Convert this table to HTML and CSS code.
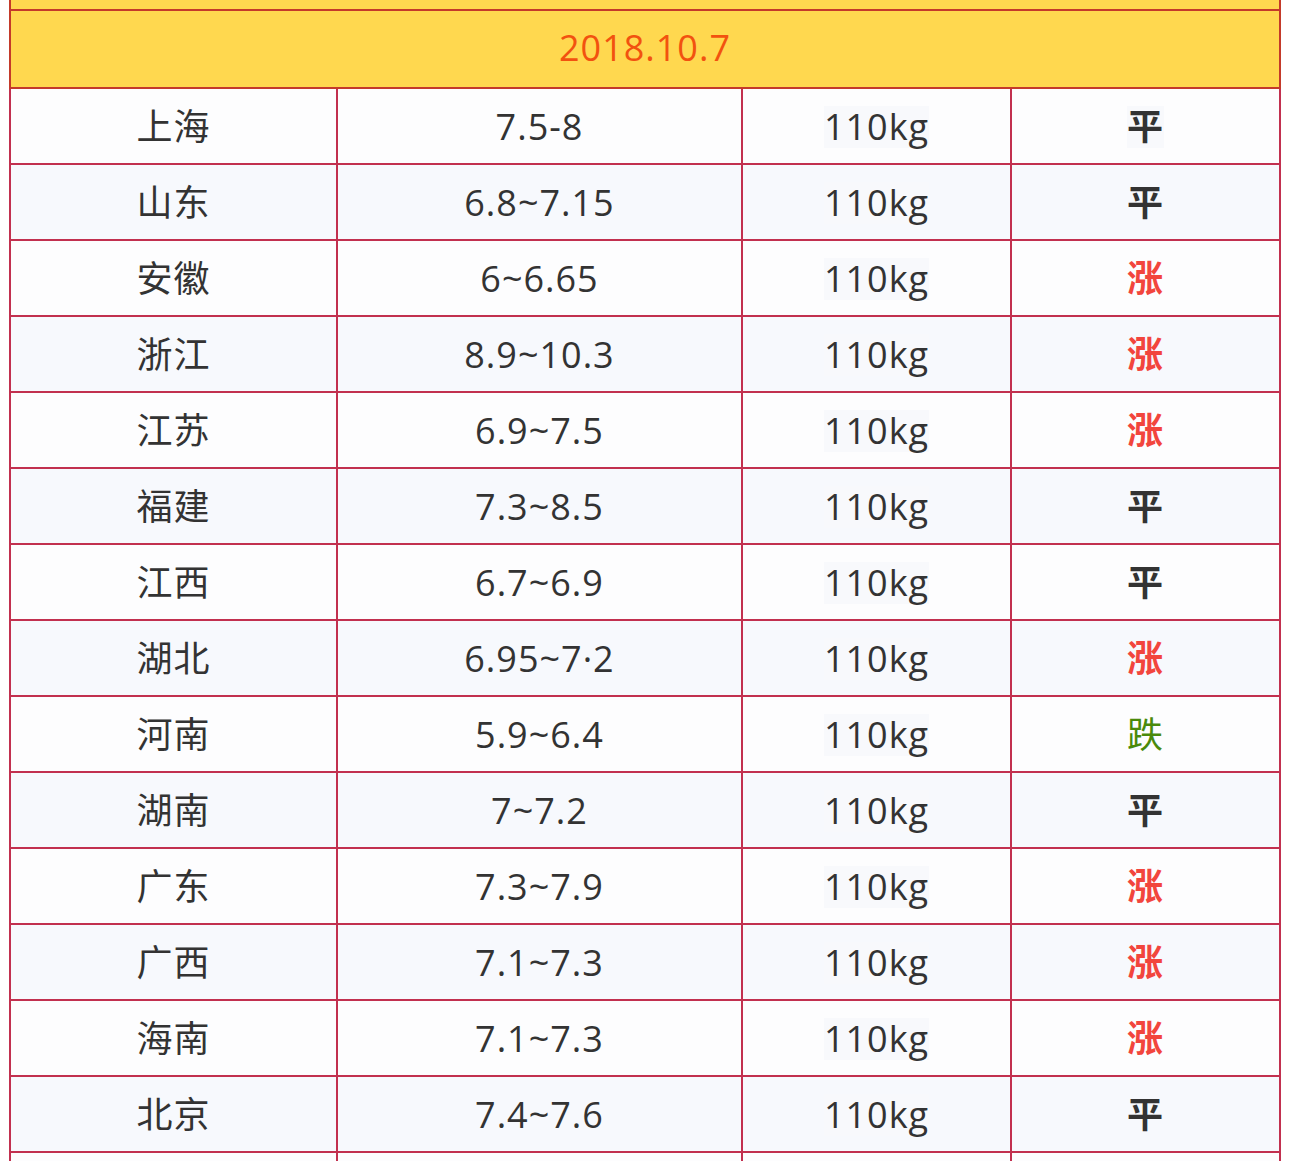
FILE: index.html
```html
<!DOCTYPE html>
<html lang="zh-CN">
<head>
<meta charset="utf-8">
<title>生猪价格 2018.10.7</title>
<link rel="stylesheet" href="styles.css">
</head>
<body>
<div class="wrap">
  <table class="price">
    <colgroup>
      <col class="c1"><col class="c2"><col class="c3"><col class="c4">
    </colgroup>
    <tbody>
      <tr class="top"><td colspan="4"></td></tr>
      <tr class="head"><td colspan="4">2018.10.7</td></tr>
      <tr><td>上海</td><td>7.5-8</td><td><span class="hl">110kg</span></td><td><span class="hl flat">平</span></td></tr>
      <tr><td>山东</td><td>6.8~7.15</td><td><span class="hl">110kg</span></td><td><span class="flat">平</span></td></tr>
      <tr><td>安徽</td><td>6~6.65</td><td><span class="hl">110kg</span></td><td><span class="up">涨</span></td></tr>
      <tr><td>浙江</td><td>8.9~10.3</td><td><span class="hl">110kg</span></td><td><span class="up">涨</span></td></tr>
      <tr><td>江苏</td><td>6.9~7.5</td><td><span class="hl">110kg</span></td><td><span class="up">涨</span></td></tr>
      <tr><td>福建</td><td>7.3~8.5</td><td><span class="hl">110kg</span></td><td><span class="flat">平</span></td></tr>
      <tr><td>江西</td><td>6.7~6.9</td><td><span class="hl">110kg</span></td><td><span class="flat">平</span></td></tr>
      <tr><td>湖北</td><td>6.95~7·2</td><td><span class="hl">110kg</span></td><td><span class="up">涨</span></td></tr>
      <tr><td>河南</td><td>5.9~6.4</td><td><span class="hl">110kg</span></td><td><span class="down">跌</span></td></tr>
      <tr><td>湖南</td><td>7~7.2</td><td><span class="hl">110kg</span></td><td><span class="flat">平</span></td></tr>
      <tr><td>广东</td><td>7.3~7.9</td><td><span class="hl">110kg</span></td><td><span class="up">涨</span></td></tr>
      <tr><td>广西</td><td>7.1~7.3</td><td><span class="hl">110kg</span></td><td><span class="up">涨</span></td></tr>
      <tr><td>海南</td><td>7.1~7.3</td><td><span class="hl">110kg</span></td><td><span class="up">涨</span></td></tr>
      <tr><td>北京</td><td>7.4~7.6</td><td><span class="hl">110kg</span></td><td><span class="flat">平</span></td></tr>
      <tr class="tail"><td></td><td></td><td></td><td></td></tr>
    </tbody>
  </table>
</div>
</body>
</html>
```
FILE: styles.css
```css
html, body {
  margin: 0;
  padding: 0;
  background: #ffffff;
}
.wrap {
  padding-left: 9px;
  width: 1286px;
  height: 1161px;
  overflow: hidden;
  box-sizing: border-box;
}
.price {
  width: 1270px;
  border-collapse: collapse;
  table-layout: fixed;
  font-family: "Open Sans", "Noto Sans CJK SC", sans-serif;
  font-size: 36px;
  letter-spacing: 1px;
  color: #333333;
}
.c1 { width: 327px; }
.c2 { width: 405px; }
.c3 { width: 269px; }
.c4 { width: 269px; }
.price td {
  border: 2px solid #c2304f;
  text-align: center;
  vertical-align: middle;
  height: 72px;
  padding: 2px 0 0 0;
  line-height: 44px;
}
.price tr:nth-child(odd) td { background: #fdfdfe; }
.price tr:nth-child(even) td { background: #f7f9fd; }
.price tr.top td {
  height: 9px;
  padding: 0;
  line-height: 0;
  background: #ffd84f;
  border-color: #c43a2a;
  border-top: 0;
}
.price tr.head td {
  background: #ffd84f;
  border-color: #c43a2a;
  color: #f2520f;
  height: 73px;
  padding: 0 0 3px 0;
}
.hl {
  background: #f8f9fc;
  display: inline-block;
  padding: 0;
  line-height: 42px;
}
.flat { font-weight: bold; color: #333333; }
.up { font-weight: bold; color: #f2453d; }
.down { color: #4a8a0a; }
```
